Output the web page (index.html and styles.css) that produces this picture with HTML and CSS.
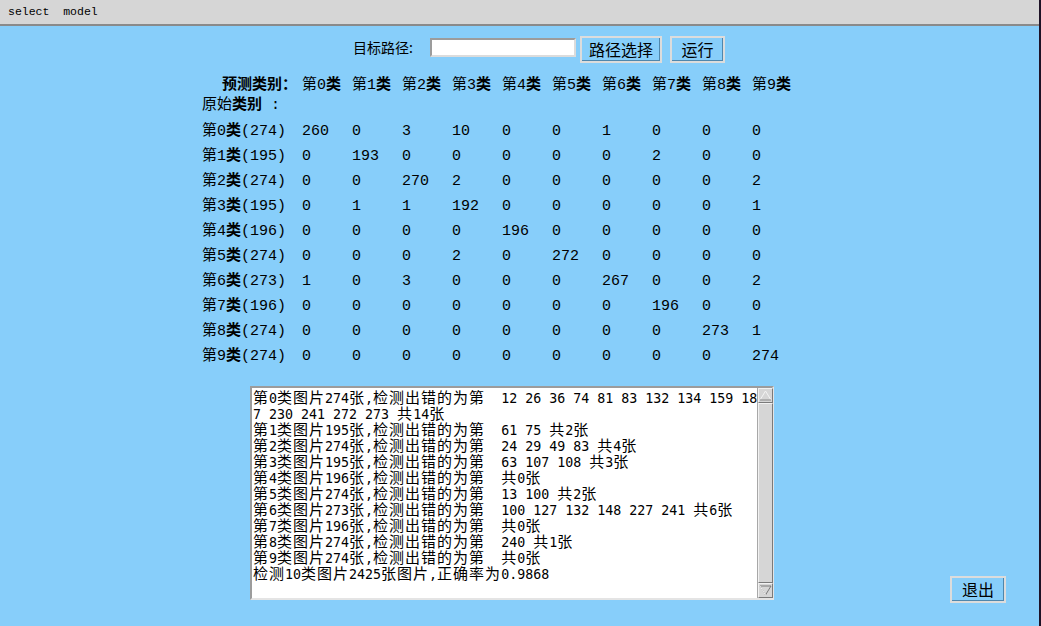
FILE: index.html
```html
<!DOCTYPE html>
<html lang="zh">
<head>
<meta charset="utf-8">
<title>select model</title>
<link rel="stylesheet" href="styles.css">
</head>
<body>
<div class="frame">
  <div class="titlebar">select  model</div>
  <div class="toolbar">
    <span class="label">目标路径:</span>
    <div class="field"></div>
    <button class="btn btn-wide">路径选择</button>
    <button class="btn btn-run">运行</button>
  </div>

  <div class="matrix">
    <div class="mrow head">
      <div class="corner"><b>预测类别：</b></div>
      <div>第0<b>类</b></div><div>第1<b>类</b></div><div>第2<b>类</b></div><div>第3<b>类</b></div><div>第4<b>类</b></div>
      <div>第5<b>类</b></div><div>第6<b>类</b></div><div>第7<b>类</b></div><div>第8<b>类</b></div><div>第9<b>类</b></div>
    </div>
    <div class="orig">原始<b>类别</b> :</div>
    <div class="mrow data"><div>第0<b>类</b>(274)</div><div>260</div><div>0</div><div>3</div><div>10</div><div>0</div><div>0</div><div>1</div><div>0</div><div>0</div><div>0</div></div>
    <div class="mrow data"><div>第1<b>类</b>(195)</div><div>0</div><div>193</div><div>0</div><div>0</div><div>0</div><div>0</div><div>0</div><div>2</div><div>0</div><div>0</div></div>
    <div class="mrow data"><div>第2<b>类</b>(274)</div><div>0</div><div>0</div><div>270</div><div>2</div><div>0</div><div>0</div><div>0</div><div>0</div><div>0</div><div>2</div></div>
    <div class="mrow data"><div>第3<b>类</b>(195)</div><div>0</div><div>1</div><div>1</div><div>192</div><div>0</div><div>0</div><div>0</div><div>0</div><div>0</div><div>1</div></div>
    <div class="mrow data"><div>第4<b>类</b>(196)</div><div>0</div><div>0</div><div>0</div><div>0</div><div>196</div><div>0</div><div>0</div><div>0</div><div>0</div><div>0</div></div>
    <div class="mrow data"><div>第5<b>类</b>(274)</div><div>0</div><div>0</div><div>0</div><div>2</div><div>0</div><div>272</div><div>0</div><div>0</div><div>0</div><div>0</div></div>
    <div class="mrow data"><div>第6<b>类</b>(273)</div><div>1</div><div>0</div><div>3</div><div>0</div><div>0</div><div>0</div><div>267</div><div>0</div><div>0</div><div>2</div></div>
    <div class="mrow data"><div>第7<b>类</b>(196)</div><div>0</div><div>0</div><div>0</div><div>0</div><div>0</div><div>0</div><div>0</div><div>196</div><div>0</div><div>0</div></div>
    <div class="mrow data"><div>第8<b>类</b>(274)</div><div>0</div><div>0</div><div>0</div><div>0</div><div>0</div><div>0</div><div>0</div><div>0</div><div>273</div><div>1</div></div>
    <div class="mrow data"><div>第9<b>类</b>(274)</div><div>0</div><div>0</div><div>0</div><div>0</div><div>0</div><div>0</div><div>0</div><div>0</div><div>0</div><div>274</div></div>
  </div>

  <div class="lower">
    <div class="textarea">
      <div class="text">
        <div class="ln">第<span class="a">0</span>类图片<span class="a">274</span>张<span class="a">,</span>检测出错的为第<span class="a">  12 26 36 74 81 83 132 134 159 18</span></div>
        <div class="ln"><span class="a">7 230 241 272 273 </span>共<span class="a">14</span>张</div>
        <div class="ln">第<span class="a">1</span>类图片<span class="a">195</span>张<span class="a">,</span>检测出错的为第<span class="a">  61 75 </span>共<span class="a">2</span>张</div>
        <div class="ln">第<span class="a">2</span>类图片<span class="a">274</span>张<span class="a">,</span>检测出错的为第<span class="a">  24 29 49 83 </span>共<span class="a">4</span>张</div>
        <div class="ln">第<span class="a">3</span>类图片<span class="a">195</span>张<span class="a">,</span>检测出错的为第<span class="a">  63 107 108 </span>共<span class="a">3</span>张</div>
        <div class="ln">第<span class="a">4</span>类图片<span class="a">196</span>张<span class="a">,</span>检测出错的为第<span class="a">  </span>共<span class="a">0</span>张</div>
        <div class="ln">第<span class="a">5</span>类图片<span class="a">274</span>张<span class="a">,</span>检测出错的为第<span class="a">  13 100 </span>共<span class="a">2</span>张</div>
        <div class="ln">第<span class="a">6</span>类图片<span class="a">273</span>张<span class="a">,</span>检测出错的为第<span class="a">  100 127 132 148 227 241 </span>共<span class="a">6</span>张</div>
        <div class="ln">第<span class="a">7</span>类图片<span class="a">196</span>张<span class="a">,</span>检测出错的为第<span class="a">  </span>共<span class="a">0</span>张</div>
        <div class="ln">第<span class="a">8</span>类图片<span class="a">274</span>张<span class="a">,</span>检测出错的为第<span class="a">  240 </span>共<span class="a">1</span>张</div>
        <div class="ln">第<span class="a">9</span>类图片<span class="a">274</span>张<span class="a">,</span>检测出错的为第<span class="a">  </span>共<span class="a">0</span>张</div>
        <div class="ln">检测<span class="a">10</span>类图片<span class="a">2425</span>张图片<span class="a">,</span>正确率为<span class="a">0.9868</span></div>
      </div>
      <div class="scrollbar">
        <div class="arrow">
          <svg width="13" height="13" viewBox="0 0 13 13"><polygon points="6.5,2 12,11 1,11" fill="#d6d6d6" stroke="#f4f4f4" stroke-width="1"/><path d="M12 11 L1 11" stroke="#7a7a7a" stroke-width="1"/></svg>
        </div>
        <div class="thumb"></div>
        <div class="arrow">
          <svg width="13" height="13" viewBox="0 0 13 13"><polygon points="1,2 12,2 6.5,11" fill="#d6d6d6" stroke="#7a7a7a" stroke-width="1"/><path d="M1 2 L6.5 11" stroke="#f4f4f4" stroke-width="1"/></svg>
        </div>
      </div>
    </div>
    <button class="btn btn-exit">退出</button>
  </div>
</div>
</body>
</html>
```

FILE: styles.css
```css
html, body {
  margin: 0;
  padding: 0;
}
body {
  width: 1041px;
  height: 626px;
  overflow: hidden;
  background: #87cefa;
  font-family: "Liberation Mono", "Noto Sans CJK SC", monospace;
  color: #000;
}
.frame {
  width: 1039px;
  height: 626px;
  border-right: 2px solid #1e1226;
  display: flex;
  flex-direction: column;
}
.titlebar {
  height: 24px;
  background: #d6d6d6;
  border-bottom: 2px solid #8a8a8a;
  font-family: "Liberation Mono", monospace;
  font-size: 11.5px;
  line-height: 24px;
  padding-left: 8px;
  white-space: pre;
}
.toolbar {
  display: flex;
  align-items: flex-start;
  margin-top: 10px;
  padding-left: 353px;
  height: 27px;
}
.label {
  font-family: "Noto Sans CJK SC", sans-serif;
  font-size: 14px;
  line-height: 20px;
  margin-top: 1px;
  margin-right: 17px;
}
.field {
  width: 142px;
  height: 15px;
  margin-top: 2px;
  background: #fff;
  border: 2px solid;
  border-color: #9c9c9c #dcdcdc #dcdcdc #9c9c9c;
  margin-right: 4px;
}
.btn {
  box-sizing: border-box;
  background: #87cefa;
  border: 2px solid #dcdcdc;
  box-shadow: inset -1px -1px 0 #4f87ad;
  font-family: "Noto Sans CJK SC", sans-serif;
  font-size: 16px;
  color: #000;
  padding: 0;
  height: 27px;
  line-height: 21px;
  cursor: default;
}
.btn-wide {
  width: 82px;
  margin-right: 8px;
}
.btn-run {
  width: 55px;
}
.matrix {
  margin-top: 13px;
  padding-left: 202px;
  font-size: 15px;
}
.matrix b {
  font-weight: 700;
}
.mrow {
  display: grid;
  grid-template-columns: 100px repeat(10, 50px);
  white-space: pre;
}
.head {
  height: 20px;
  line-height: 20px;
}
.corner {
  padding-left: 20px;
}
.orig {
  height: 23px;
  line-height: 20px;
  white-space: pre;
}
.data {
  height: 25px;
  line-height: 25px;
}
.lower {
  display: flex;
  align-items: flex-end;
  margin-top: 17px;
  padding-left: 250px;
}
.textarea {
  width: 520px;
  height: 210px;
  border: 2px solid;
  border-color: #9c9c9c #e4e4e4 #e4e4e4 #9c9c9c;
  background: #fff;
  display: flex;
}
.text {
  flex: 1;
  padding: 1px 0 0 1px;
  overflow: visible;
  font-family: "Noto Sans CJK SC", sans-serif;
  font-size: 15px;
  letter-spacing: 1px;
}
.ln {
  height: 16px;
  line-height: 16px;
  white-space: pre;
}
.a {
  font-family: "DejaVu Sans Mono", monospace;
  font-size: 13.3px;
  letter-spacing: 0;
  line-height: 16px;
}
.scrollbar {
  width: 15px;
  background: #d6d6d6;
  border-left: 1px solid #a8a8a8;
  display: flex;
  flex-direction: column;
}
.arrow {
  height: 15px;
  box-sizing: border-box;
  border: 1px solid;
  border-color: #f2f2f2 #7a7a7a #7a7a7a #f2f2f2;
  display: flex;
  align-items: center;
  justify-content: center;
}
.thumb {
  flex: 1;
  border: 1px solid;
  border-color: #f2f2f2 #7a7a7a #7a7a7a #f2f2f2;
}
.btn-exit {
  width: 56px;
  margin-left: 176px;
  margin-bottom: -3px;
}
```
